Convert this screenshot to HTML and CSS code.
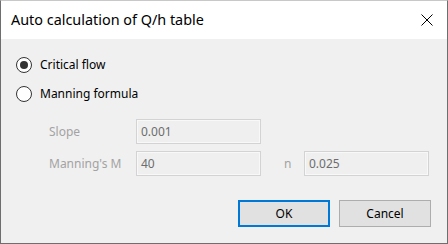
FILE: index.html
```html
<!DOCTYPE html>
<html>
<head>
<meta charset="utf-8">
<link rel="stylesheet" href="styles.css">
</head>
<body>
<div class="window">
  <div class="titlebar">
    <span class="title">Auto calculation of Q/h table</span>
    <svg class="close" width="12" height="12" viewBox="0 0 12 12"><path d="M0.5 0.5 L11.5 11.5 M11.5 0.5 L0.5 11.5" stroke="#000" stroke-width="1" fill="none"/></svg>
  </div>
  <div class="content">
    <div class="radio-row">
      <span class="radio checked"><span class="dot"></span></span>
      <span class="radio-label">Critical flow</span>
    </div>
    <div class="radio-row">
      <span class="radio"></span>
      <span class="radio-label">Manning formula</span>
    </div>
    <div class="fields">
      <span class="label">Slope</span>
      <span class="box">0.001</span>
      <span></span><span></span><span></span>
      <span class="label">Manning's M</span>
      <span class="box">40</span>
      <span></span>
      <span class="label">n</span>
      <span class="box">0.025</span>
    </div>
    <div class="buttons">
      <span class="btn default">OK</span>
      <span class="btn">Cancel</span>
    </div>
  </div>
</div>
</body>
</html>
```
FILE: styles.css
```css
html, body {
  margin: 0;
  padding: 0;
}
body {
  font-family: "Noto Sans", "Open Sans", sans-serif;
  font-size: 12px;
  color: #000;
}
.window {
  width: 448px;
  height: 244px;
  box-sizing: border-box;
  border: 1px solid #6e6e6e;
  border-top-color: #c8c8c8;
  display: flex;
  flex-direction: column;
}
.titlebar {
  height: 38px;
  background: #fff;
  display: flex;
  align-items: center;
  justify-content: space-between;
  padding: 0 14px 0 10px;
}
.title {
  font-size: 14.4px;
  color: #000;
  margin-top: -1px;
}
.close {
  display: block;
}
.content {
  flex: 1;
  background: #f0f0f0;
  padding: 16px 16px 0 15px;
  display: flex;
  flex-direction: column;
}
.radio-row {
  height: 20px;
  display: flex;
  align-items: center;
  margin-bottom: 9px;
}
.radio {
  width: 16px;
  height: 16px;
  box-sizing: border-box;
  border: 1px solid #333;
  border-radius: 50%;
  background: #fff;
  display: flex;
  align-items: center;
  justify-content: center;
  margin-right: 8px;
}
.dot {
  width: 8px;
  height: 8px;
  border-radius: 50%;
  background: #333;
}
.radio-label {
  line-height: 20px;
}
.fields {
  margin-top: 6px;
  margin-left: 33px;
  display: grid;
  grid-template-columns: 87px 125px 23px 20px 125px;
  grid-auto-rows: 25px;
  row-gap: 7px;
  align-items: center;
}
.label {
  color: #a3a3a3;
}
.box {
  height: 25px;
  box-sizing: border-box;
  border: 1px solid #d3d3d3;
  box-shadow: inset 0 0 0 1px #f8f8f8;
  background: #efefef;
  color: #6d6d6d;
  padding-left: 4px;
  line-height: 23px;
}
.buttons {
  margin-top: 24px;
  display: flex;
  justify-content: flex-end;
  gap: 9px;
}
.btn {
  width: 92px;
  height: 27px;
  box-sizing: border-box;
  border: 1px solid #adadad;
  background: #e1e1e1;
  display: flex;
  align-items: center;
  justify-content: center;
}
.btn.default {
  border: 2px solid #0078d7;
}
```
